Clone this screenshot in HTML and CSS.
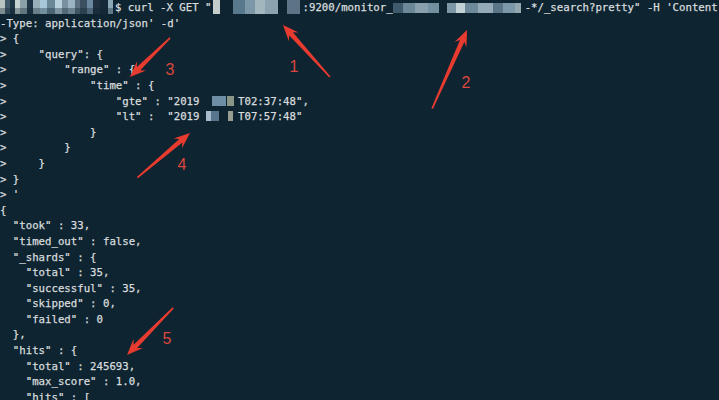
FILE: index.html
```html
<!DOCTYPE html>
<html>
	<head>
		<title>curl _search</title>

		<link rel="stylesheet" href="styles.css">
	</head>

	<body>
		<div class="terminal">

<pre class="output"><span class="mosaic m-user"></span>$ curl -X GET "<span class="mosaic m-host"></span>:9200/monitor_<span class="mosaic m-index"></span>-*/_search?pretty" -H 'Content
-Type: application/json' -d'
> {
>     "query": {
>         "range" : {
>             "time" : {
>                 "gte" : "2019<span class="mosaic m-date m-gte"></span>T02:37:48",
>                 "lt" :  "2019<span class="mosaic m-date m-lt"></span>T07:57:48"
>             }
>         }
>     }
> }
> '
{
  "took" : 33,
  "timed_out" : false,
  "_shards" : {
    "total" : 35,
    "successful" : 35,
    "skipped" : 0,
    "failed" : 0
  },
  "hits" : {
    "total" : 245693,
    "max_score" : 1.0,
    "hits" : [</pre>

			<!-- red arrows drawn over the screenshot -->
			<svg class="marks" width="719" height="400" viewBox="0 0 719 400">
				<g class="arrow">
					<polygon transform="translate(283 25) rotate(-132.1)" points="0,0 -16,-6.5 -12,-2.4 -70,-0.8 -70,0.8 -12,2.4 -16,6.5"/>
					<polygon transform="translate(467 30) rotate(-66.1)" points="0,0 -16,-6.5 -12,-2.4 -86,-0.8 -86,0.8 -12,2.4 -16,6.5"/>
					<polygon transform="translate(130 77) rotate(135.7)" points="0,0 -16,-6.5 -12,-2.4 -56,-0.8 -56,0.8 -12,2.4 -16,6.5"/>
					<polygon transform="translate(190 133) rotate(-40.3)" points="0,0 -16,-6.5 -12,-2.4 -69,-0.8 -69,0.8 -12,2.4 -16,6.5"/>
					<polygon transform="translate(127 355) rotate(134.4)" points="0,0 -16,-6.5 -12,-2.4 -66,-0.8 -66,0.8 -12,2.4 -16,6.5"/>
				</g>
				<g class="label">
					<text x="294" y="72">1</text>
					<text x="466" y="88">2</text>
					<text x="170" y="75">3</text>
					<text x="182" y="170">4</text>
					<text x="167" y="344">5</text>
				</g>
			</svg>

		</div>
	</body>
</html>
```

FILE: styles.css
```css
	body
	{
		margin: 0;
		background-color: #0e2431;
	}

	.terminal
	{
		position: relative;
		width: 719px;
		height: 400px;
		overflow: hidden;
	}

	.output
	{
		margin: 0;
		padding: 0;
		font-family: "DejaVu Sans Mono", monospace;
		font-size: 10.7px;
		line-height: 15.6px;
		color: #d8dcdd;
		-webkit-text-stroke: 0.25px #d8dcdd;
		white-space: pre;
	}

	/* pixelated parts of the screenshot */
	.mosaic
	{
		display: inline-block;
		height: 14px;
		vertical-align: -3px;
		filter: blur(0.5px);
	}

	.m-user
	{
		width: 115px;
		background:
			linear-gradient(to bottom, rgba(14,36,49,0) 0px, rgba(14,36,49,0) 8px, rgba(14,36,49,0.35) 8px),
			linear-gradient(to right,
				#b8c4c0 0px, #b8c4c0 5px, #405868 5px, #405868 10px,
				#1c3444 10px, #1c3444 15px, #c6d2ce 15px, #c6d2ce 20px,
				#8aa0a8 20px, #8aa0a8 27px, #1e3646 27px, #1e3646 33px,
				#9ab0b8 33px, #9ab0b8 40px, #a8c8d8 40px, #a8c8d8 47px,
				#6a8898 47px, #6a8898 55px, #b8d0dc 55px, #b8d0dc 62px,
				#7890a0 62px, #7890a0 68px, #9ab4c4 68px, #9ab4c4 75px,
				#5a7080 75px, #5a7080 80px, #3a5060 80px, #3a5060 87px,
				#6c88a0 87px, #6c88a0 93px, #203040 93px, #203040 100px,
				#16293a 100px, #16293a 108px, #8aa8b8 108px, #8aa8b8 113px,
				#0e2431 113px);
	}

	.m-host
	{
		width: 91px;
		background: linear-gradient(to right,
			#0e2431 0px, #0e2431 1.5px, #c4cccc 1.5px, #c4cccc 8.5px,
			#0e2431 8.5px, #0e2431 21px, #58788c 21px, #58788c 33px,
			#7c98a8 33px, #7c98a8 43px, #a2b6be 43px, #a2b6be 53px,
			#8ca2ae 53px, #8ca2ae 66px, #0e2431 66px, #0e2431 75px,
			#5c7486 75px, #5c7486 88px, #0e2431 88px);
	}

	.m-index
	{
		width: 132px;
		height: 10px;
		vertical-align: -2px;
		background: linear-gradient(to right,
			#3e5a6c 0px, #3e5a6c 10px, #6a8898 10px, #6a8898 22px,
			#88a0ae 22px, #88a0ae 35px, #7290a0 35px, #7290a0 46px,
			#0e2431 46px, #0e2431 54px, #7c98a6 54px, #7c98a6 63px,
			#c2d2d6 63px, #c2d2d6 72px, #6e8a9a 72px, #6e8a9a 85px,
			#94aab6 85px, #94aab6 100px, #5a7686 100px, #5a7686 110px,
			#7b98a8 110px, #7b98a8 122px, #94a8b0 122px, #94a8b0 128px,
			#0e2431 128px);
	}

	.m-date
	{
		width: 38.6px;
		height: 10px;
		vertical-align: -1px;
	}

	.m-gte
	{
		background: linear-gradient(to right,
			transparent 0px, transparent 13px, #6e8ea6 13px, #6e8ea6 27px,
			transparent 27px, transparent 28px, #8c9688 28px, #8c9688 35px,
			transparent 35px);
	}

	.m-lt
	{
		background: linear-gradient(to right,
			transparent 0px, transparent 7px, #a6bccc 7px, #a6bccc 12px,
			#58768e 12px, #58768e 20px, transparent 20px, transparent 29px,
			#9a9e90 29px, #9a9e90 34px, transparent 34px);
	}

	.marks
	{
		position: absolute;
		left: 0;
		top: 0;
	}

	.arrow
	{
		fill: #e83b2f;
	}

	.label
	{
		fill: #dc463c;
		font-family: "Liberation Sans", Arial, sans-serif;
		font-size: 16px;
		text-anchor: middle;
	}
```
